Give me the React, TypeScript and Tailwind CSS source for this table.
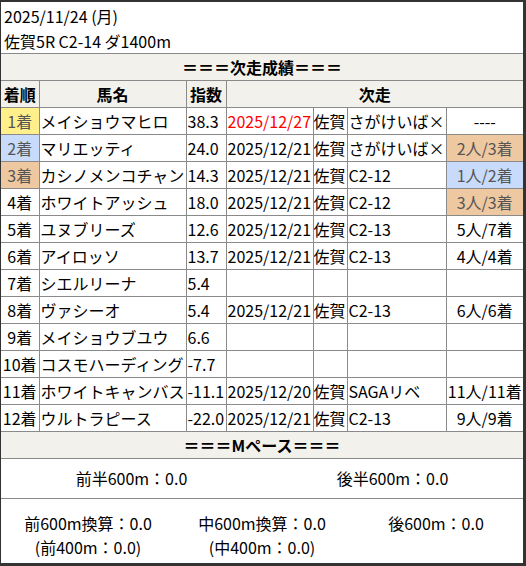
import React from 'react';

type Row = {
  rank: string;
  name: string;
  idx: string;
  date?: string;
  red?: boolean;
  place?: string;
  race?: string;
  result?: string;
  rankBg?: string;
  resultBg?: string;
};

const rows: Row[] = [
  { rank: '1着', name: 'メイショウマヒロ', idx: '38.3', date: '2025/12/27', red: true, place: '佐賀', race: 'さがけいば×', result: '----', rankBg: 'bg-[#fff08c]' },
  { rank: '2着', name: 'マリエッティ', idx: '24.0', date: '2025/12/21', place: '佐賀', race: 'さがけいば×', result: '2人/3着', rankBg: 'bg-[#c9dbfa]', resultBg: 'bg-[#eec8a0]' },
  { rank: '3着', name: 'カシノメンコチャン', idx: '14.3', date: '2025/12/21', place: '佐賀', race: 'C2-12', result: '1人/2着', rankBg: 'bg-[#eec8a0]', resultBg: 'bg-[#c9dbfa]' },
  { rank: '4着', name: 'ホワイトアッシュ', idx: '18.0', date: '2025/12/21', place: '佐賀', race: 'C2-12', result: '3人/3着', resultBg: 'bg-[#eec8a0]' },
  { rank: '5着', name: 'ユヌブリーズ', idx: '12.6', date: '2025/12/21', place: '佐賀', race: 'C2-13', result: '5人/7着' },
  { rank: '6着', name: 'アイロッソ', idx: '13.7', date: '2025/12/21', place: '佐賀', race: 'C2-13', result: '4人/4着' },
  { rank: '7着', name: 'シエルリーナ', idx: '5.4' },
  { rank: '8着', name: 'ヴァシーオ', idx: '5.4', date: '2025/12/21', place: '佐賀', race: 'C2-13', result: '6人/6着' },
  { rank: '9着', name: 'メイショウブユウ', idx: '6.6' },
  { rank: '10着', name: 'コスモハーディング', idx: '-7.7' },
  { rank: '11着', name: 'ホワイトキャンバス', idx: '-11.1', date: '2025/12/20', place: '佐賀', race: 'SAGAリベ', result: '11人/11着' },
  { rank: '12着', name: 'ウルトラピース', idx: '-22.0', date: '2025/12/21', place: '佐賀', race: 'C2-13', result: '9人/9着' },
];

const cell = 'border border-[#8a8a8a] h-[27px] p-0 whitespace-nowrap overflow-hidden';

export default function App() {
  return (
    <div
      className="w-[526px] h-[566px] bg-white border-l border-t-2 border-r-[3px] border-b-[3px] border-[#333] text-[16px] text-black leading-[25px] overflow-hidden"
      style={{ fontFamily: '"Noto Sans CJK JP", "Noto Sans", sans-serif' }}
    >
      {/* Header */}
      <div className="px-[3px] pt-[2px] h-[51px]">
        <div>2025/11/24 (月)</div>
        <div>佐賀5R C2-14 ダ1400m</div>
      </div>

      <table className="table-fixed border-collapse w-[522px]">
        <colgroup>
          <col className="w-[38px]" />
          <col className="w-[147px]" />
          <col className="w-[40px]" />
          <col className="w-[87px]" />
          <col className="w-[34px]" />
          <col className="w-[99px]" />
          <col className="w-[77px]" />
        </colgroup>
        <tbody>
          <tr className="bg-[#f2f1ec]">
            <td colSpan={7} className={`${cell} border-x-0 text-center font-bold`}>＝＝＝次走成績＝＝＝</td>
          </tr>
          <tr className="bg-[#f2f1ec] font-bold text-center">
            <td className={`${cell} border-l-0`}>着順</td>
            <td className={cell}>馬名</td>
            <td className={cell}>指数</td>
            <td colSpan={4} className={`${cell} border-r-0`}>次走</td>
          </tr>
          {rows.map((r) => (
            <tr key={r.rank}>
              <td className={`${cell} border-l-0 text-center ${r.rankBg ?? ''} ${r.rankBg ? 'text-[#555]' : ''}`}>{r.rank}</td>
              <td className={`${cell} pl-[1px]`}>{r.name}</td>
              <td className={`${cell} pl-[1px]`}>{r.idx}</td>
              <td className={`${cell} pl-[1px] ${r.red ? 'text-[#ff0000]' : ''}`}>{r.date ?? ''}</td>
              <td className={cell}>{r.place ?? ''}</td>
              <td className={`${cell} pl-[1px]`}>{r.race ?? ''}</td>
              <td className={`${cell} border-r-0 text-center ${r.resultBg ?? ''} ${r.resultBg ? 'text-[#555]' : ''}`}>{r.result ?? ''}</td>
            </tr>
          ))}
          <tr className="bg-[#f2f1ec]">
            <td colSpan={7} className={`${cell} border-x-0 text-center font-bold`}>＝＝＝Mペース＝＝＝</td>
          </tr>
        </tbody>
      </table>

      <div className="grid grid-cols-2 h-[40px] items-center border-b border-[#8a8a8a] text-center">
        <div>前半600m：0.0</div>
        <div>後半600m：0.0</div>
      </div>

      <div className="grid grid-cols-3 pt-[12px] text-center leading-[24px]">
        <div>
          <div>前600m換算：0.0</div>
          <div>(前400m：0.0)</div>
        </div>
        <div>
          <div>中600m換算：0.0</div>
          <div>(中400m：0.0)</div>
        </div>
        <div>
          <div>後600m：0.0</div>
        </div>
      </div>
    </div>
  );
}
